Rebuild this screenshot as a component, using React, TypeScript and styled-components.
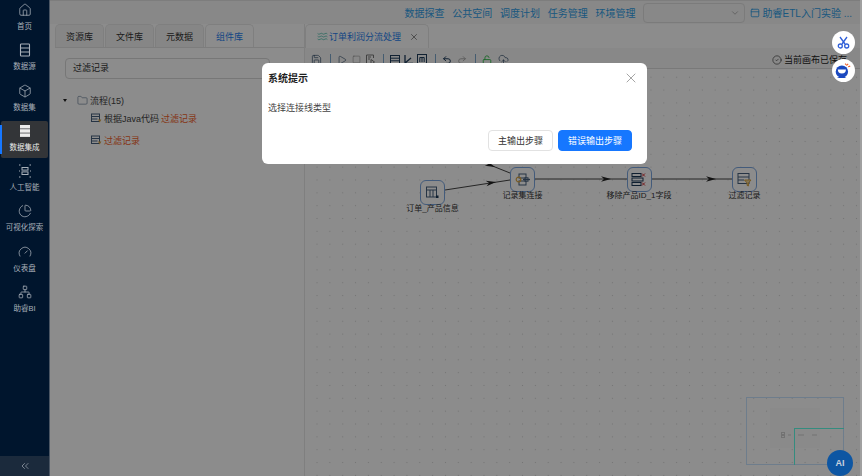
import React from 'react';
import styled, { createGlobalStyle } from 'styled-components';
import {
  House,
  Box,
  ChartPie,
  Gauge,
  Network,
  ChevronsLeft,
  ChevronDown,
  X,
  Play,
  Square,
  Undo2,
  Redo2,
  LockOpen,
  CloudUpload,
  CircleCheck,
  Save,
  PanelTop,
  Folder,
  Waves,
} from 'lucide-react';

const GlobalStyle = createGlobalStyle`
  html, body { margin: 0; padding: 0; height: 100%; overflow: hidden; }
  #root { height: 100%; }
  * { box-sizing: border-box; }
  body { font-family: "Liberation Sans", "Noto Sans CJK SC", sans-serif; background: #a0a0a0; }
`;

const Page = styled.div`
  display: flex;
  height: 100vh;
  margin-right: 2px;
  position: relative;
  background: #fff;
`;

/* sidebar ------------------------------------------------------------------ */

const Sidebar = styled.aside`
  width: 50px;
  flex: none;
  background: #00152d;
  display: flex;
  flex-direction: column;
  position: relative;
  z-index: 3;
  border-right: 1px solid #4a5563;
`;

const SideList = styled.nav`
  flex: 1;
  display: flex;
  flex-direction: column;
`;

const SideItem = styled.div<{ $active?: boolean }>`
  height: ${(p) => (p.$active ? '37.3px' : '40.3px')};
  margin: ${(p) => (p.$active ? '0 1px 3px' : '0')};
  padding-top: 3px;
  display: flex;
  flex-direction: column;
  align-items: center;
  gap: 5px;
  position: relative;
  font-size: 7.5px;
  line-height: 10px;
  white-space: nowrap;
  color: ${(p) => (p.$active ? '#ececec' : '#a9b1ba')};
  background: ${(p) => (p.$active ? '#333538' : 'transparent')};
  border-radius: ${(p) => (p.$active ? '2px' : '0')};
  &::before {
    content: ${(p) => (p.$active ? '""' : 'none')};
    position: absolute;
    left: -1px;
    top: 4px;
    bottom: 4px;
    width: 2px;
    background: #1677ff;
  }
  svg { display: block; }
`;

const Collapse = styled.div`
  height: 20px;
  background: #1b2a3c;
  color: #a3abb5;
  display: flex;
  align-items: center;
  justify-content: center;
`;

/* main --------------------------------------------------------------------- */

const Main = styled.div`
  flex: 1;
  min-width: 0;
  display: flex;
  flex-direction: column;
`;

const TopBar = styled.header`
  height: 24px;
  flex: none;
  display: flex;
  align-items: center;
  justify-content: flex-end;
  padding-right: 8px;
  border-top: 1px solid #e4e4e4;
  background: #f7f7f7;
  font-size: 10px;
  color: #2f9fe8;
`;

const NavLink = styled.span`
  margin-left: 7.75px;
  white-space: nowrap;
`;

const TopSelect = styled.div`
  width: 102px;
  height: 20px;
  margin-left: 7px;
  border: 1px solid #e0e0e0;
  border-radius: 4px;
  display: flex;
  align-items: center;
  justify-content: flex-end;
  padding-right: 4px;
  color: #aaa;
`;

const Guide = styled.span`
  margin-left: 5px;
  display: flex;
  align-items: center;
  gap: 3px;
  white-space: nowrap;
`;

const Body = styled.div`
  flex: 1;
  min-height: 0;
  display: flex;
`;

const LeftPanel = styled.section`
  width: 255px;
  flex: none;
  border-right: 1px solid #e8e8e8;
  padding-left: 5px;
`;

const Tabs = styled.div`
  display: flex;
  gap: 1px;
  height: 24px;
  border-bottom: 1px solid #e4e4e4;
`;

const Tab = styled.div<{ $active?: boolean }>`
  width: 49px;
  border: 1px solid #e8e8e8;
  border-bottom: none;
  border-radius: 5px 5px 0 0;
  background: ${(p) => (p.$active ? '#fff' : '#f5f5f5')};
  color: ${(p) => (p.$active ? '#1f7ff0' : '#333')};
  font-size: 9px;
  display: flex;
  align-items: center;
  justify-content: center;
`;

const Search = styled.div`
  width: 205px;
  height: 21px;
  margin: 10px 0 0 10px;
  border: 1px solid #d9d9d9;
  border-radius: 4px;
  padding-left: 7px;
  font-size: 9px;
  line-height: 19px;
  color: #333;
`;

const Tree = styled.div`
  margin-top: 14px;
  font-size: 9px;
  color: #444;
`;

const TreeRow = styled.div<{ $depth: number }>`
  display: flex;
  align-items: center;
  height: ${(p) => (p.$depth ? 22 : 14)}px;
  gap: 2px;
  padding-left: ${(p) => (p.$depth ? 36 : 8)}px;
  white-space: nowrap;
`;

const Caret = styled.i`
  width: 0;
  height: 0;
  margin-right: 8px;
  border-left: 2.5px solid transparent;
  border-right: 2.5px solid transparent;
  border-top: 3.5px solid #222;
`;

const Hit = styled.span`
  color: #f2622a;
`;

const Editor = styled.section`
  flex: 1;
  min-width: 0;
  display: flex;
  flex-direction: column;
`;

const EditorTab = styled.div`
  width: 124px;
  height: 24px;
  flex: none;
  border: 1px solid #e8e8e8;
  border-bottom: none;
  border-radius: 5px 5px 0 0;
  display: flex;
  align-items: center;
  padding-left: 11px;
  gap: 1px;
  font-size: 9px;
  color: #1f7ff0;
  white-space: nowrap;
`;

const TabClose = styled.span`
  margin-left: 7px;
  color: #777;
  display: flex;
`;

const Toolbar = styled.div`
  height: 21px;
  flex: none;
  display: flex;
  align-items: center;
  padding: 3px 0 0 6px;
  color: #1f3d5c;
  background: #f7f7f7;
  border-bottom: 1px solid #dcdcdc;
`;

const ToolGroup = styled.div<{ $gap: number }>`
  display: flex;
  align-items: center;
  gap: ${(p) => p.$gap}px;
`;

const ToolDivider = styled.i`
  width: 1px;
  height: 12px;
  margin: 0 6px 0 8px;
  background: #7fa8cc;
`;

const Saved = styled.span`
  margin-left: auto;
  display: flex;
  align-items: center;
  gap: 2px;
  font-size: 9px;
  color: #222;
  white-space: nowrap;
  width: 88px;
  overflow: hidden;
`;

const Canvas = styled.div`
  flex: 1;
  position: relative;
  overflow: hidden;
  background-image: radial-gradient(circle, #d4d4d4 0.7px, transparent 1px);
  background-size: 12.85px 12.85px;
  background-position: 5.6px 1.8px;
`;

const Edges = styled.svg`
  position: absolute;
  left: 0;
  top: 0;
  width: 100%;
  height: 100%;
`;

const Node = styled.div<{ $x: number; $y: number }>`
  position: absolute;
  left: ${(p) => p.$x}px;
  top: ${(p) => p.$y}px;
  width: 0;
  display: flex;
  flex-direction: column;
  align-items: center;
  font-size: 8px;
  line-height: 10px;
  color: #333;
  white-space: nowrap;
`;

const NodeBox = styled.div`
  width: 25px;
  height: 25px;
  flex: none;
  border: 1px solid #7ba6e0;
  border-radius: 6px;
  display: flex;
  align-items: center;
  justify-content: center;
  margin-bottom: -1px;
  background: #fff;
`;

const MiniMap = styled.div`
  position: absolute;
  right: 16px;
  bottom: 11px;
  width: 98px;
  height: 68px;
  border: 1px solid #c8e4ff;
  display: flex;
  align-items: center;
  justify-content: center;
`;

const MiniInner = styled.div`
  width: 50px;
  height: 40px;
  background: #fbfbfb;
  margin-bottom: 6px;
  display: flex;
  align-items: center;
  justify-content: flex-end;
  padding: 14px 1px 0 0;
`;

const MiniView = styled.div`
  position: absolute;
  left: 47px;
  top: 30px;
  right: -1px;
  bottom: -1px;
  border-left: 1.5px solid #5fffe8;
  border-top: 1.5px solid #5fffe8;
`;

/* overlay ------------------------------------------------------------------ */

const Mask = styled.div`
  position: absolute;
  inset: 0;
  z-index: 2;
  background: rgba(0, 0, 0, 0.45);
`;

const Dialog = styled.div`
  position: absolute;
  left: 262px;
  top: 63px;
  width: 385px;
  height: 101px;
  z-index: 4;
  background: #fff;
  border-radius: 6px;
  padding: 7px 15px 0 6px;
  display: flex;
  flex-direction: column;
`;

const DialogHead = styled.div`
  display: flex;
  align-items: center;
  justify-content: space-between;
  height: 15px;
  font-size: 10px;
  font-weight: 700;
  color: #1f1f1f;
  svg { color: #777; margin-right: -7px; }
`;

const DialogText = styled.div`
  margin-top: 15px;
  font-size: 9px;
  line-height: 16px;
  color: #444;
`;

const DialogFoot = styled.div`
  margin-top: 14px;
  display: flex;
  justify-content: flex-end;
  gap: 5px;
`;

const Button = styled.button<{ $primary?: boolean }>`
  height: 21px;
  padding: 0;
  width: ${(p) => (p.$primary ? 74 : 65)}px;
  border-radius: 4px;
  font-family: inherit;
  font-size: 9px;
  border: 1px solid ${(p) => (p.$primary ? '#1677ff' : '#e2e2e2')};
  background: ${(p) => (p.$primary ? '#1677ff' : '#fff')};
  color: ${(p) => (p.$primary ? '#fff' : '#333')};
`;

const FloatRound = styled.div<{ $top: number }>`
  position: absolute;
  right: 5.5px;
  top: ${(p) => p.$top}px;
  width: 23px;
  height: 23px;
  z-index: 4;
  border-radius: 50%;
  background: #fff;
  display: flex;
  align-items: center;
  justify-content: center;
`;

const AiBadge = styled.div`
  position: absolute;
  left: 827px;
  top: 450px;
  width: 26px;
  height: 26px;
  z-index: 4;
  border-radius: 50%;
  background: #0d56a3;
  color: #c9d3df;
  font-size: 9px;
  font-weight: 700;
  display: flex;
  align-items: center;
  justify-content: center;
`;

/* drawn icons -------------------------------------------------------------- */

const SourceIcon = () => (
  <svg width="14" height="14" viewBox="0 0 14 14" fill="none" stroke="currentColor" strokeWidth="1.1">
    <rect x="2.5" y="1" width="9" height="12" rx="0.8" />
    <path d="M2.5 5h9M2.5 9h9" />
  </svg>
);

const StackIcon = () => (
  <svg width="14" height="14" viewBox="0 0 14 14" fill="#ececec">
    <rect x="2" y="1" width="10" height="3.5" />
    <rect x="2" y="5.2" width="10" height="3.5" />
    <rect x="2" y="9.4" width="10" height="3.5" />
  </svg>
);

const AiIcon = () => (
  <svg width="14" height="14" viewBox="0 0 14 14" fill="none" stroke="currentColor" strokeWidth="1">
    <path d="M1 1h1.5M11.5 1H13M13 13h-1.5M2.5 13H1M1 7h1M12 7h1" />
    <rect x="4" y="3.5" width="6" height="2.6" />
    <rect x="4" y="7.9" width="6" height="2.6" />
  </svg>
);

const RuleIcon = () => (
  <svg width="11" height="11" viewBox="0 0 11 11" fill="none">
    <rect x="0.5" y="1" width="8" height="7.5" stroke="#46607c" />
    <path d="M0.5 3.5h8M0.5 6h6" stroke="#46607c" />
    <path d="M7 6.5h3.4L8.7 9.5z" fill="#d9a441" />
  </svg>
);

const GridTool = () => (
  <svg width="10" height="11" viewBox="0 0 10 11" fill="none" stroke="currentColor">
    <rect x="0.5" y="1.5" width="9" height="8" />
    <path d="M0.5 4.2h9M0.5 6.8h9" />
  </svg>
);

const AngleTool = () => (
  <svg width="9" height="11" viewBox="0 0 9 11" fill="none" stroke="currentColor" strokeWidth="1.3">
    <path d="M1 1v8.5h8M1 9l6-5" />
  </svg>
);

const FrameTool = () => (
  <svg width="10" height="11" viewBox="0 0 10 11" fill="none" stroke="currentColor">
    <rect x="0.5" y="0.5" width="9" height="10" />
    <path d="M2.8 8V3.5h4.4V8M5 3.5V8" />
  </svg>
);

const PlayFile = () => (
  <svg width="9" height="11" viewBox="0 0 9 11" fill="none" stroke="#777">
    <path d="M7.5 4V1H.5v9h3.5M2 3h3M2 5h2" />
    <path d="M5 5.5l3.5 2.5L5 10.5z" />
  </svg>
);

const CutIcon = () => (
  <svg width="13" height="13" viewBox="0 0 13 13" fill="none" stroke="#2f5fd8" strokeWidth="1.3">
    <path d="M3 1l5 7M10 1L5 8" />
    <circle cx="3.3" cy="10" r="2" />
    <circle cx="9.7" cy="10" r="2" />
  </svg>
);

const BotIcon = () => (
  <svg width="18" height="17" viewBox="0 0 16 15">
    <circle cx="7" cy="8.5" r="5.5" fill="#1b49c0" />
    <path d="M3.4 6.6h7.2a3.6 3.6 0 0 1-7.2 0z" fill="#fff" />
    <path d="M5 13l-2.5 1.2h8.5L9 13z" fill="#1b49c0" />
    <path d="M11 3l1.6-1.4M12.6 4.2l1.8-.6M10 1.4l.6 1" stroke="#f2622a" strokeWidth="1.1" />
  </svg>
);

const TableNode = () => (
  <svg width="15" height="15" viewBox="0 0 15 15" fill="none" stroke="#46607c">
    <rect x="1.5" y="2" width="10" height="10" />
    <path d="M1.5 5h10M5 5v7M8 5v7" />
    <rect x="11" y="10.5" width="2.5" height="2.5" fill="#1d3a57" stroke="none" />
  </svg>
);

const JoinNode = () => (
  <svg width="16" height="15" viewBox="0 0 16 15" fill="none">
    <rect x="4" y="2" width="7" height="4" stroke="#46607c" />
    <rect x="4" y="9" width="7" height="4" stroke="#46607c" />
    <circle cx="3.5" cy="7.5" r="2.3" stroke="#d9a441" strokeWidth="1.2" />
    <path d="M8 7.5h7" stroke="#46607c" strokeWidth="1.4" />
    <rect x="10" y="5.8" width="3" height="3.4" stroke="#46607c" />
  </svg>
);

const RemoveNode = () => (
  <svg width="16" height="15" viewBox="0 0 16 15">
    <rect x="1" y="1.5" width="9" height="3" fill="none" stroke="#1d3a57" />
    <rect x="1" y="6" width="11" height="3" fill="none" stroke="#1d3a57" />
    <rect x="1" y="10.5" width="9" height="3" fill="none" stroke="#1d3a57" />
    <path d="M11 1.5l3 3M14 1.5l-3 3M11 10.5l3 3M14 10.5l-3 3" stroke="#d8363a" />
  </svg>
);

const FilterNode = () => (
  <svg width="15" height="15" viewBox="0 0 15 15" fill="none">
    <rect x="1" y="1.5" width="11" height="10" stroke="#46607c" />
    <path d="M1 5h11M1 8h6" stroke="#46607c" />
    <path d="M7.5 8h6.5l-2.6 3v3l-1.3-.6V11z" fill="#f0d9a0" stroke="#d9a441" />
  </svg>
);

const MiniFlow = () => (
  <svg width="38" height="6" viewBox="0 0 38 6" fill="none" stroke="#d0d0d0">
    <rect x="0.5" y="0.5" width="3" height="2" />
    <rect x="0.5" y="3.5" width="3" height="2" />
    <path d="M7 3h3M17 3h6M31 3h5" />
  </svg>
);

const Arrow = ({ x, y, a = 0 }: { x: number; y: number; a?: number }) => (
  <path d="M-10 -2.8L0 0L-10 2.8L-7 0z" fill="#222" transform={`translate(${x} ${y}) rotate(${a})`} />
);

const sideItems = [
  { label: '首页', icon: <House size={14} strokeWidth={1.3} /> },
  { label: '数据源', icon: <SourceIcon /> },
  { label: '数据集', icon: <Box size={14} strokeWidth={1.3} /> },
  { label: '数据集成', icon: <StackIcon />, active: true },
  { label: '人工智能', icon: <AiIcon /> },
  { label: '可视化探索', icon: <ChartPie size={14} strokeWidth={1.3} /> },
  { label: '仪表盘', icon: <Gauge size={14} strokeWidth={1.3} /> },
  { label: '助睿BI', icon: <Network size={14} strokeWidth={1.3} /> },
];

const navLinks = ['数据探查', '公共空间', '调度计划', '任务管理', '环境管理'];

const App = () => {
  return (
    <Page>
      <GlobalStyle />
      <Sidebar>
        <SideList>
          {sideItems.map((item) => (
            <SideItem key={item.label} $active={item.active}>
              {item.icon}
              <span>{item.label}</span>
            </SideItem>
          ))}
        </SideList>
        <Collapse>
          <ChevronsLeft size={12} strokeWidth={1.4} />
        </Collapse>
      </Sidebar>

      <Main>
        <TopBar>
          {navLinks.map((link) => (
            <NavLink key={link}>{link}</NavLink>
          ))}
          <TopSelect>
            <ChevronDown size={10} />
          </TopSelect>
          <Guide>
            <PanelTop size={10} />
            助睿ETL入门实验 ...
          </Guide>
        </TopBar>

        <Body>
          <LeftPanel>
            <Tabs>
              <Tab>资源库</Tab>
              <Tab>文件库</Tab>
              <Tab>元数据</Tab>
              <Tab $active>组件库</Tab>
            </Tabs>
            <Search>过滤记录</Search>
            <Tree>
              <TreeRow $depth={0}>
                <Caret />
                <Folder size={11} color="#46607c" strokeWidth={1.2} />
                流程(15)
              </TreeRow>
              <TreeRow $depth={1}>
                <RuleIcon />
                根据Java代码
                <Hit>过滤记录</Hit>
              </TreeRow>
              <TreeRow $depth={1}>
                <RuleIcon />
                <Hit>过滤记录</Hit>
              </TreeRow>
            </Tree>
          </LeftPanel>

          <Editor>
            <EditorTab>
              <Waves size={11} color="#25b09b" strokeWidth={1.4} />
              订单利润分流处理
              <TabClose>
                <X size={10} />
              </TabClose>
            </EditorTab>
            <Toolbar>
              <Save size={11} strokeWidth={1.4} />
              <ToolDivider />
              <ToolGroup $gap={5}>
                <Play size={10} strokeWidth={1.4} />
                <Square size={9} strokeWidth={1.2} color="#777" />
                <PlayFile />
              </ToolGroup>
              <ToolDivider />
              <ToolGroup $gap={4}>
                <GridTool />
                <AngleTool />
                <FrameTool />
              </ToolGroup>
              <ToolDivider />
              <ToolGroup $gap={5}>
                <Undo2 size={10} strokeWidth={2.4} />
                <Redo2 size={10} strokeWidth={1.8} color="#999" />
              </ToolGroup>
              <ToolDivider />
              <ToolGroup $gap={6}>
                <LockOpen size={10} color="#35c04f" strokeWidth={2.2} />
                <CloudUpload size={11} strokeWidth={1.4} />
              </ToolGroup>
              <Saved>
                <CircleCheck size={10} strokeWidth={1.4} />
                当前画布已保存
              </Saved>
            </Toolbar>
            <Canvas>
              <Edges>
                <path d="M140 121L205 111M170 90L205 104M230 110H322M346 110H427" stroke="#444" fill="none" />
                <Arrow x={191} y={113} a={-9} />
                <Arrow x={190} y={98} a={22} />
                <Arrow x={306} y={110} />
                <Arrow x={411} y={110} />
              </Edges>
              <Node $x={127.5} $y={111}>
                <NodeBox>
                  <TableNode />
                </NodeBox>
                订单_产品信息
              </Node>
              <Node $x={217.5} $y={98}>
                <NodeBox>
                  <JoinNode />
                </NodeBox>
                记录集连接
              </Node>
              <Node $x={334} $y={98}>
                <NodeBox>
                  <RemoveNode />
                </NodeBox>
                移除产品ID_1字段
              </Node>
              <Node $x={439.5} $y={98}>
                <NodeBox>
                  <FilterNode />
                </NodeBox>
                过滤记录
              </Node>
              <MiniMap>
                <MiniInner>
                  <MiniFlow />
                </MiniInner>
                <MiniView />
              </MiniMap>
            </Canvas>
          </Editor>
        </Body>
      </Main>

      <Mask />

      <Dialog>
        <DialogHead>
          系统提示
          <X size={16} strokeWidth={1} />
        </DialogHead>
        <DialogText>选择连接线类型</DialogText>
        <DialogFoot>
          <Button>主输出步骤</Button>
          <Button $primary>错误输出步骤</Button>
        </DialogFoot>
      </Dialog>

      <FloatRound $top={31}>
        <CutIcon />
      </FloatRound>
      <FloatRound $top={59}>
        <BotIcon />
      </FloatRound>
      <AiBadge>AI</AiBadge>
    </Page>
  );
};

export default App;
